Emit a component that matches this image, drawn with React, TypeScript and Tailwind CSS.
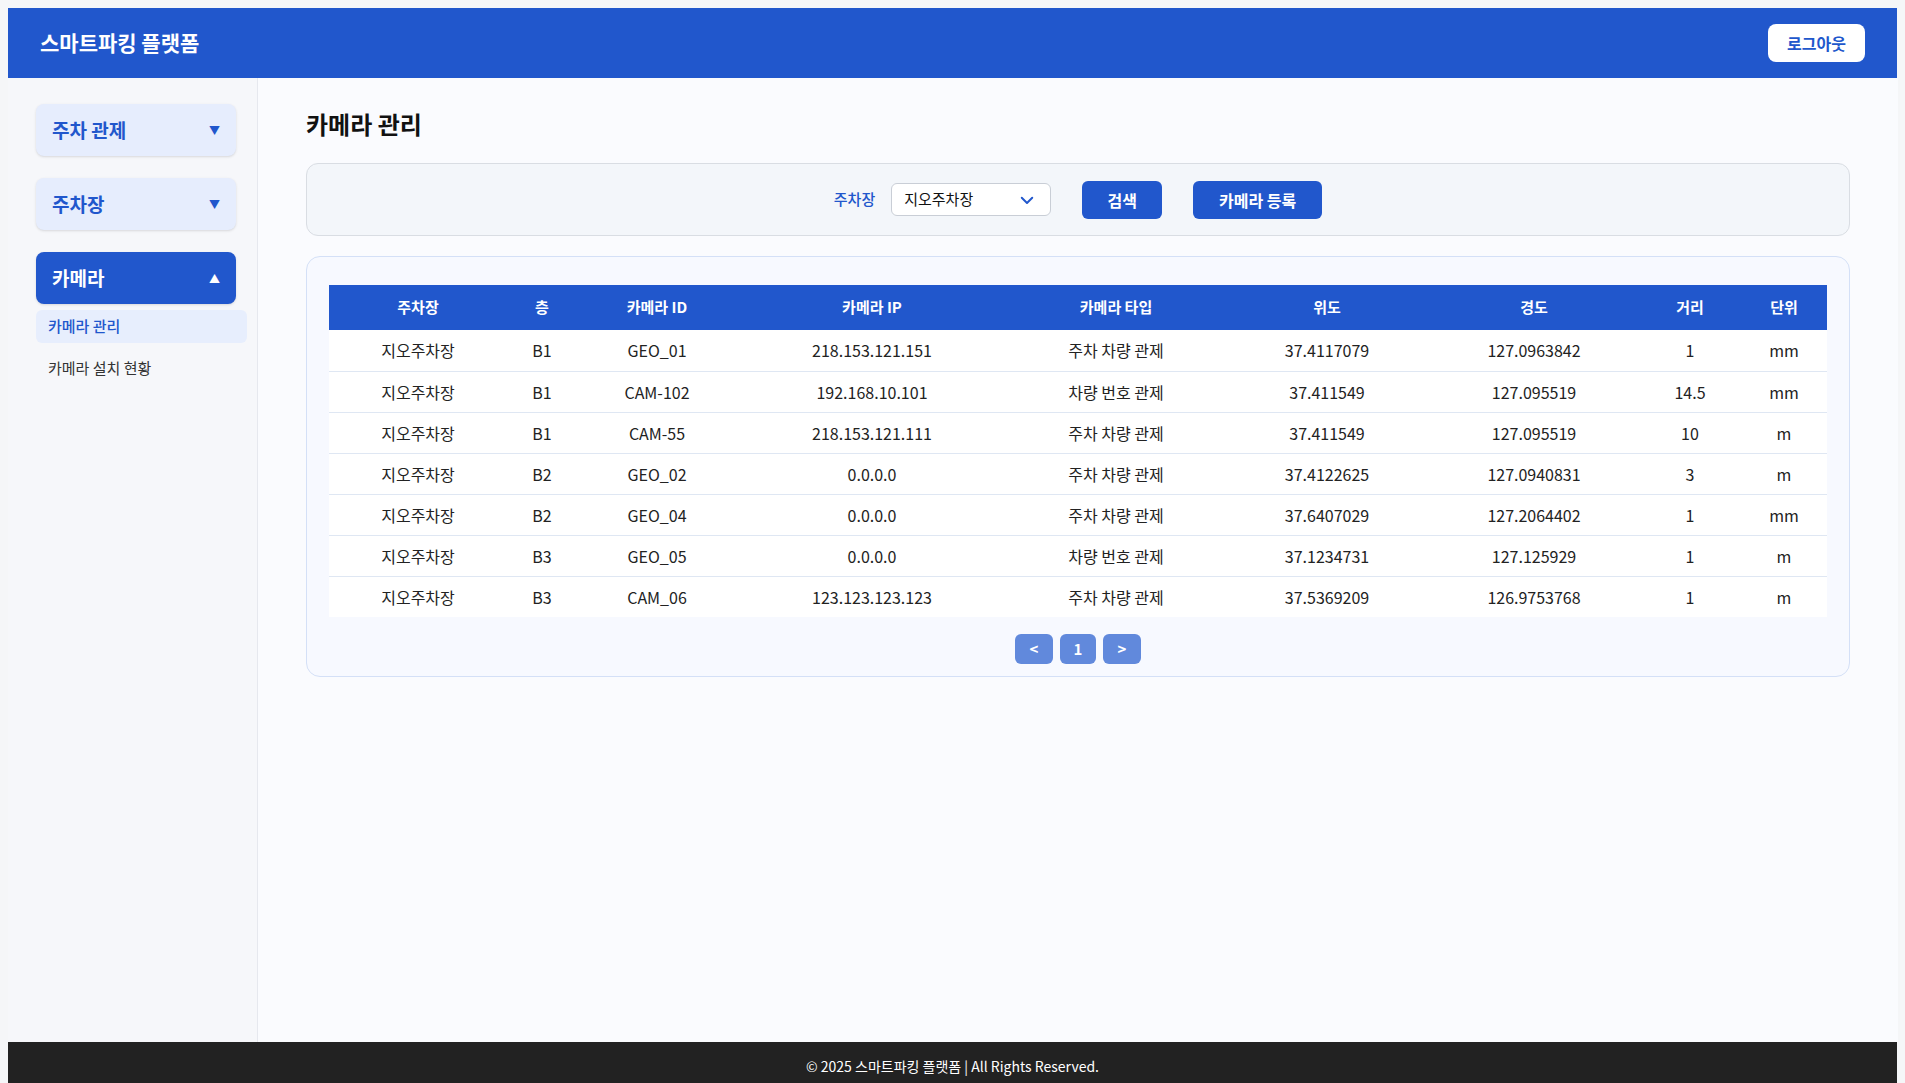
import React from 'react';

type Camera = {
  lot: string;
  floor: string;
  id: string;
  ip: string;
  type: string;
  lat: string;
  lng: string;
  dist: string;
  unit: string;
};

const cameras: Camera[] = [
  { lot: "지오주차장", floor: "B1", id: "GEO_01", ip: "218.153.121.151", type: "주차 차량 관제", lat: "37.4117079", lng: "127.0963842", dist: "1", unit: "mm" },
  { lot: "지오주차장", floor: "B1", id: "CAM-102", ip: "192.168.10.101", type: "차량 번호 관제", lat: "37.411549", lng: "127.095519", dist: "14.5", unit: "mm" },
  { lot: "지오주차장", floor: "B1", id: "CAM-55", ip: "218.153.121.111", type: "주차 차량 관제", lat: "37.411549", lng: "127.095519", dist: "10", unit: "m" },
  { lot: "지오주차장", floor: "B2", id: "GEO_02", ip: "0.0.0.0", type: "주차 차량 관제", lat: "37.4122625", lng: "127.0940831", dist: "3", unit: "m" },
  { lot: "지오주차장", floor: "B2", id: "GEO_04", ip: "0.0.0.0", type: "주차 차량 관제", lat: "37.6407029", lng: "127.2064402", dist: "1", unit: "mm" },
  { lot: "지오주차장", floor: "B3", id: "GEO_05", ip: "0.0.0.0", type: "차량 번호 관제", lat: "37.1234731", lng: "127.125929", dist: "1", unit: "m" },
  { lot: "지오주차장", floor: "B3", id: "CAM_06", ip: "123.123.123.123", type: "주차 차량 관제", lat: "37.5369209", lng: "126.9753768", dist: "1", unit: "m" },
];

const columns = [
  { label: "주차장", w: "w-[178px]" },
  { label: "층", w: "w-[70px]" },
  { label: "카메라 ID", w: "w-[160px]" },
  { label: "카메라 IP", w: "w-[270px]" },
  { label: "카메라 타입", w: "w-[218px]" },
  { label: "위도", w: "w-[204px]" },
  { label: "경도", w: "w-[210px]" },
  { label: "거리", w: "w-[102px]" },
  { label: "단위", w: "w-[86px]" },
];

function SideButton({ label, open }: { label: string; open?: boolean }) {
  return (
    <button
      className={`w-[200px] h-[52px] rounded-lg flex items-center justify-between pl-[16px] pr-[16px] text-[19px] font-bold shadow-sm ${
        open ? "bg-[#2157cc] text-white" : "bg-[#e6edfd] text-[#2157cc]"
      }`}
    >
      <span>{label}</span>
      <span className="text-[11px]">{open ? "▲" : "▼"}</span>
    </button>
  );
}

export default function App() {
  return (
    <div
      className="p-2 bg-[#f5f6f8] text-[#222]"
      style={{ fontFamily: '"Noto Sans CJK KR", "Noto Sans", sans-serif' }}
    >
      <header className="h-[70px] bg-[#2157cc] flex items-center justify-between px-8">
        <h1 className="text-[21px] font-bold text-white">스마트파킹 플랫폼</h1>
        <button className="w-[97px] h-[38px] rounded-lg bg-white text-[#2157cc] text-[16px] font-bold">
          로그아웃
        </button>
      </header>

      <div className="flex min-h-[964px]">
        <aside className="w-[250px] shrink-0 bg-[#f6f7fa] border-r border-[#e6e8ee] pt-[26px] pl-[28px] pr-[10px]">
          <div className="flex flex-col gap-[22px]">
            <SideButton label="주차 관제" />
            <SideButton label="주차장" />
            <div>
              <SideButton label="카메라" open />
              <div className="mt-[6px]">
                <div className="h-[33px] rounded-md bg-[#e7eefd] text-[#2157cc] text-[15px] font-medium flex items-center pl-[12px]">
                  카메라 관리
                </div>
                <div className="h-[33px] text-[15px] text-[#333] flex items-center pl-[12px] mt-[9px]">
                  카메라 설치 현황
                </div>
              </div>
            </div>
          </div>
        </aside>

        <main className="flex-1 bg-[#fafbfe] px-[48px] pt-[28px]">
          <h2 className="text-[24px] font-bold leading-[36px] text-[#111] mb-[21px]">카메라 관리</h2>

          <div className="h-[73px] rounded-xl border border-[#d9dde3] bg-[#f3f6fa] flex items-center justify-center">
            <label className="text-[15px] font-medium text-[#2157cc] mr-[16px]">주차장</label>
            <div className="w-[160px] h-[33px] rounded-md border border-[#c9ced6] bg-white flex items-center justify-between pl-[12px] pr-[14px] text-[15px] text-[#111]">
              <span>지오주차장</span>
              <svg width="18" height="18" viewBox="0 0 24 24" fill="none" stroke="#2157cc" strokeWidth="2.6" strokeLinecap="round" strokeLinejoin="round">
                <path d="M5 9l7 7 7-7" />
              </svg>
            </div>
            <button className="ml-[31px] w-[80px] h-[38px] rounded-md bg-[#2157cc] text-white text-[16px] font-bold">
              검색
            </button>
            <button className="ml-[31px] w-[129px] h-[38px] rounded-md bg-[#2157cc] text-white text-[16px] font-bold">
              카메라 등록
            </button>
          </div>

          <div className="mt-[20px] rounded-[14px] border border-[#d4e0f7] bg-[#f7f9ff] pt-[28px] px-[22px] pb-[12px]">
            <table className="w-full border-collapse table-fixed text-[16px]">
              <thead>
                <tr className="bg-[#2157cc] text-white h-[45px]">
                  {columns.map(c => (
                    <th key={c.label} className={`${c.w} font-bold text-[15px]`}>{c.label}</th>
                  ))}
                </tr>
              </thead>
              <tbody>
                {cameras.map((cam, idx) => (
                  <tr key={idx} className={`bg-white h-[41px] text-center ${idx < cameras.length - 1 ? "border-b border-[#dfe7f3]" : ""}`}>
                    <td>{cam.lot}</td>
                    <td>{cam.floor}</td>
                    <td>{cam.id}</td>
                    <td>{cam.ip}</td>
                    <td>{cam.type}</td>
                    <td>{cam.lat}</td>
                    <td>{cam.lng}</td>
                    <td>{cam.dist}</td>
                    <td>{cam.unit}</td>
                  </tr>
                ))}
              </tbody>
            </table>
            <div className="mt-[17px] flex justify-center gap-[7px]">
              <button className="w-[38px] h-[30px] rounded-md bg-[#6189dc] text-white text-[15px] font-bold">&lt;</button>
              <button className="w-[36px] h-[30px] rounded-md bg-[#6189dc] text-white text-[15px] font-bold">1</button>
              <button className="w-[38px] h-[30px] rounded-md bg-[#6189dc] text-white text-[15px] font-bold">&gt;</button>
            </div>
          </div>
        </main>
      </div>

      <footer className="h-[48px] bg-[#222] text-white text-[14px] flex items-center justify-center">
        © 2025 스마트파킹 플랫폼 | All Rights Reserved.
      </footer>
    </div>
  );
}
